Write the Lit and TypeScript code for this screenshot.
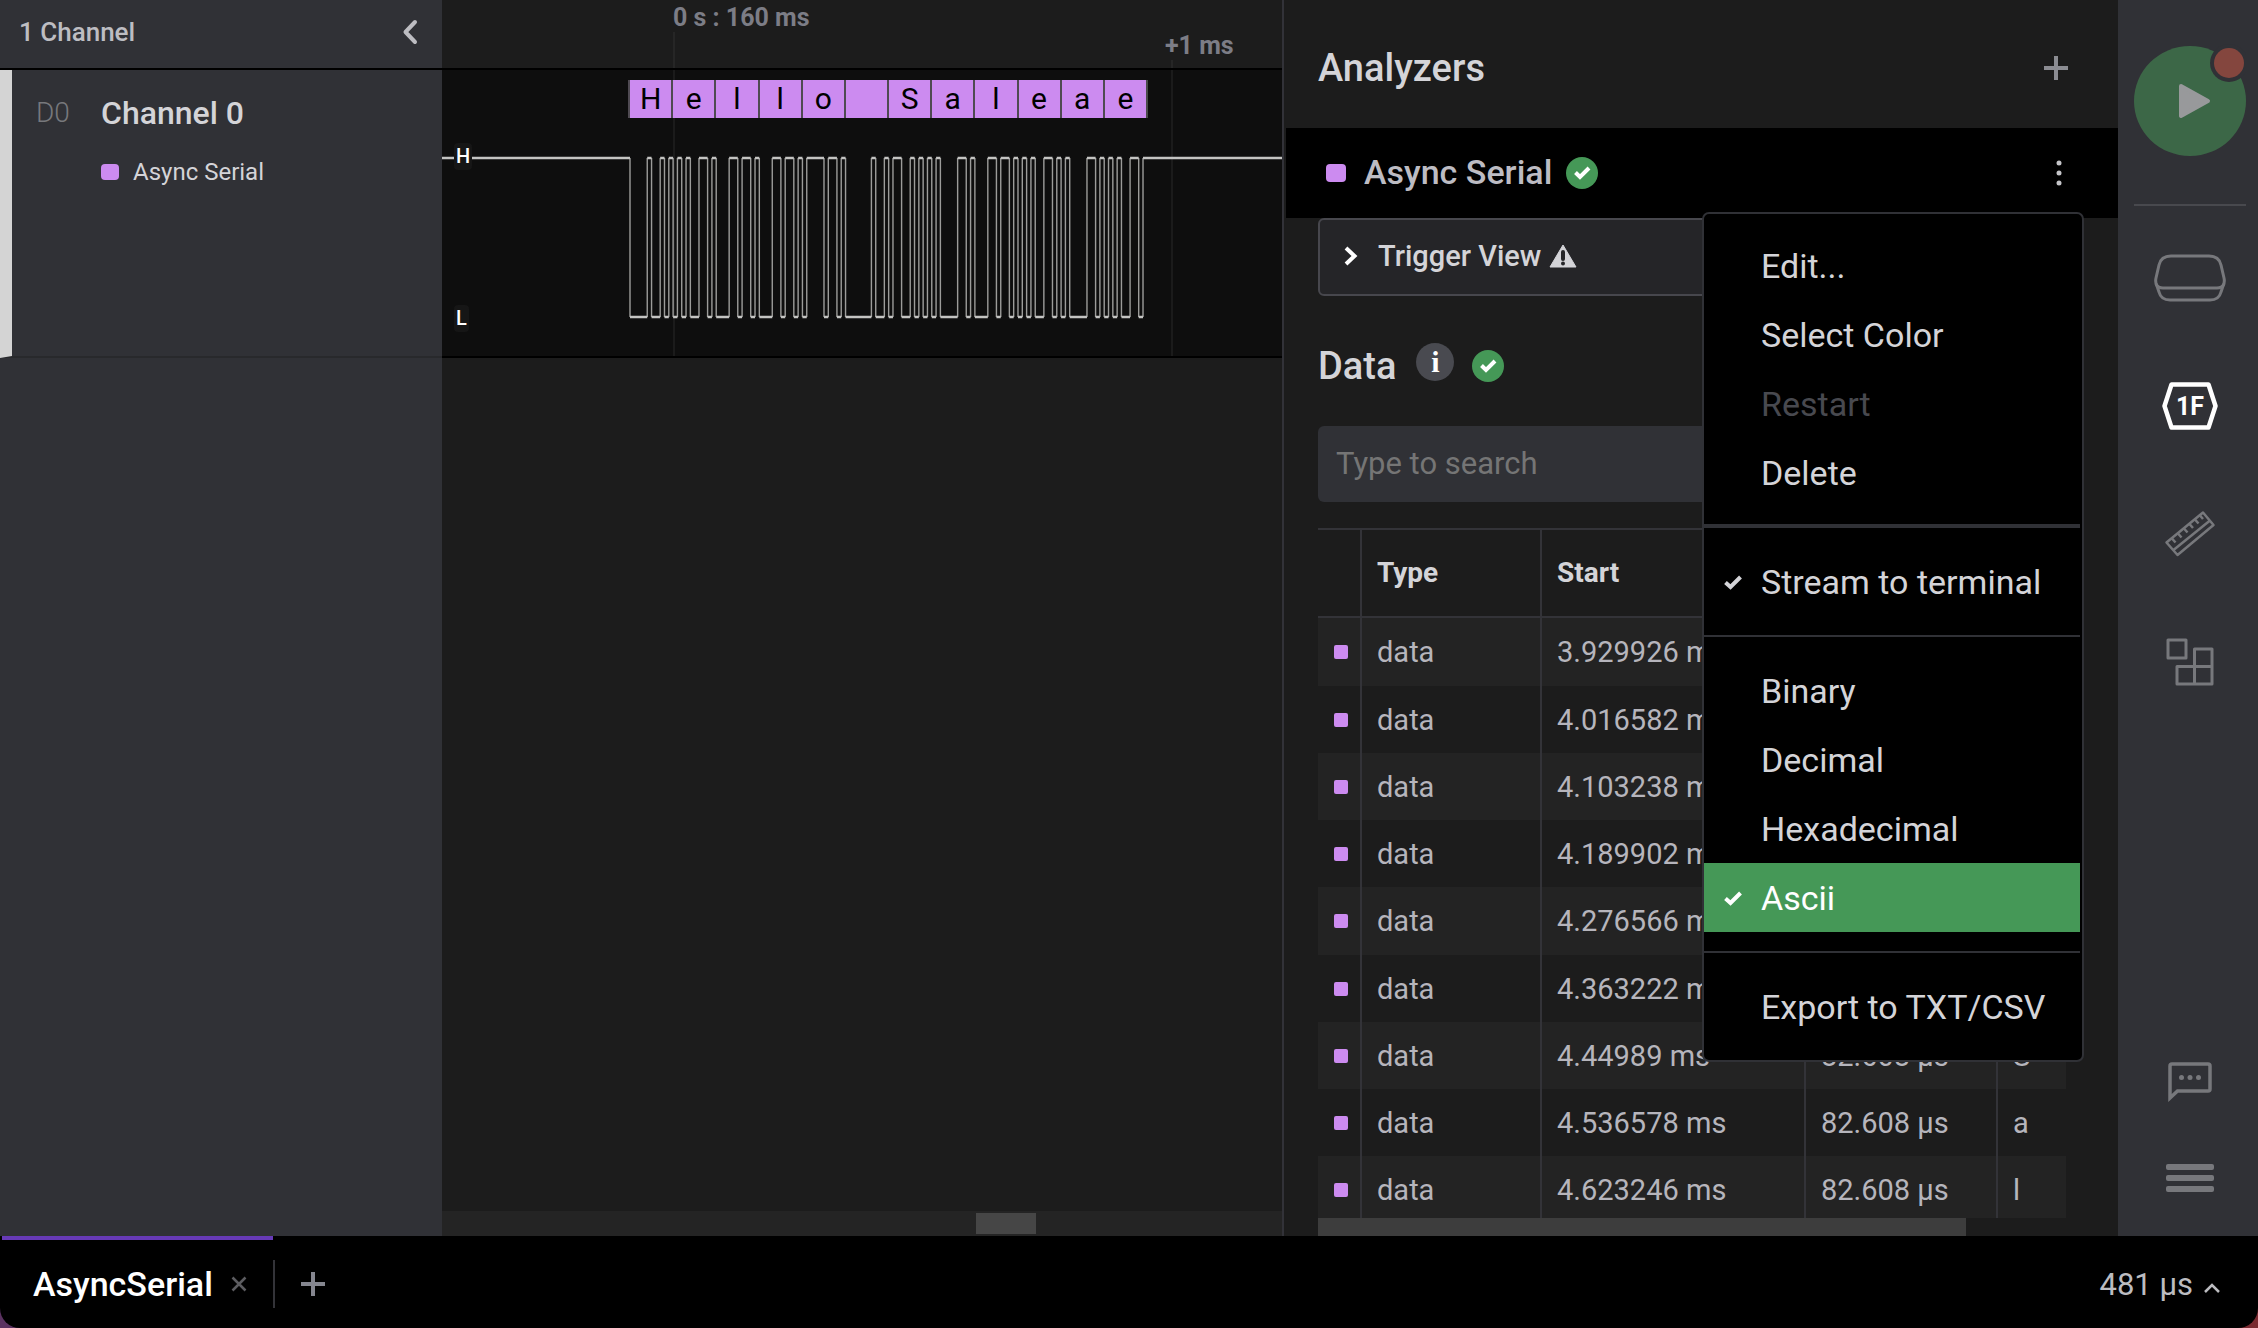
import { LitElement, html, svg, css, nothing } from "lit";
import { customElement, property, state } from "lit/decorators.js";
import { classMap } from "lit/directives/class-map.js";
import { styleMap } from "lit/directives/style-map.js";

const base = css`
  :host {
    display: block;
    box-sizing: border-box;
    font-family: Roboto, "Liberation Sans", sans-serif;
    color: #d4d4d8;
  }
  *,
  *::before,
  *::after {
    box-sizing: border-box;
  }
  button {
    display: flex;
    align-items: center;
    justify-content: center;
    margin: 0;
    padding: 0;
    border: 0;
    background: none;
    color: inherit;
    font: inherit;
    cursor: pointer;
  }
  h1,
  h2,
  h3,
  p {
    margin: 0;
    font-weight: 500;
  }
  svg {
    display: block;
    flex: none;
  }
`;

const MESSAGE = "Hello Saleae";

/* Time axis, in pixels of the plot. */
const AXIS = { frameStart: 188, bit: 4.311, high: 88, low: 247, farRight: 6000 };

/** Points at which a UART line (8N1, least significant bit first) changes level. */
function uartEdges(text: string): { at: number; high: boolean }[] {
  const levels: boolean[] = [];
  for (const ch of text) {
    levels.push(false);
    for (let i = 0; i < 8; i++) levels.push(((ch.charCodeAt(0) >> i) & 1) === 1);
    levels.push(true);
  }
  const edges: { at: number; high: boolean }[] = [];
  let current = true;
  levels.forEach((level, i) => {
    if (level !== current) {
      edges.push({ at: AXIS.frameStart + i * AXIS.bit, high: level });
      current = level;
    }
  });
  return edges;
}

const checkBadge = html`<svg width="32" height="32" viewBox="0 0 32 32" role="img" aria-label="Ready">
  <circle cx="16" cy="16" r="16" fill="#459857" />
  <path d="M9.500 15.500 L14 20 L23 11" fill="none" stroke="#fff" stroke-width="4" />
</svg>`;

@customElement("channel-list")
export class ChannelList extends LitElement {
  static styles = [
    base,
    css`
      :host {
        background: #303136;
      }
      .head {
        display: flex;
        align-items: center;
        justify-content: space-between;
        height: 70px;
        padding: 0 22px 4px 19px;
        border-bottom: 2px solid #000;
        color: #bdbdc2;
      }
      .count {
        font-size: 26px;
      }
      .collapse {
        width: 20px;
        height: 28px;
      }
      .channel {
        display: grid;
        grid-template-columns: 65px 1fr;
        align-content: start;
        height: 288px;
        padding: 23px 20px 0 24px;
        border-left: 12px solid #d4d4d4;
        border-bottom: 2px solid #28292c;
      }
      .port {
        color: #77787c;
        font-size: 28px;
        font-weight: 300;
        line-height: 40px;
      }
      .name {
        font-size: 32px;
        line-height: 40px;
      }
      .analyzer {
        grid-column: 2;
        display: flex;
        align-items: center;
        gap: 14px;
        margin-top: 24px;
        font-size: 24px;
        line-height: 30px;
      }
      .swatch {
        width: 18px;
        height: 16px;
        border-radius: 4px;
        background: #cc8bf0;
      }
    `,
  ];

  render() {
    return html`
      <div class="head">
        <h2 class="count">1 Channel</h2>
        <button class="collapse" aria-label="Collapse channels">
          <svg width="20" height="28" viewBox="0 0 20 28">
            <path
              d="M15 4 L5.500 14 L15 24"
              fill="none"
              stroke="#bdbdc2"
              stroke-width="4"
              stroke-linecap="round"
              stroke-linejoin="round"
            />
          </svg>
        </button>
      </div>
      <div class="channel">
        <span class="port">D0</span>
        <h3 class="name">Channel 0</h3>
        <div class="analyzer"><span class="swatch"></span><span>Async Serial</span></div>
      </div>
    `;
  }
}

@customElement("signal-plot")
export class SignalPlot extends LitElement {
  static styles = [
    base,
    css`
      :host {
        display: flex;
        flex-direction: column;
        min-width: 0;
        overflow: hidden;
        background: #1c1c1c;
      }
      .ruler {
        position: relative;
        height: 70px;
        border-bottom: 2px solid #000;
        color: #7c7d86;
        font-size: 25px;
        font-weight: 700;
        line-height: 28px;
        white-space: nowrap;
      }
      .tick {
        position: absolute;
        bottom: 0;
        width: 2px;
        background: #262626;
      }
      .tick-label {
        position: absolute;
      }
      .lane {
        position: relative;
        height: 288px;
        padding-top: 10px;
        border-bottom: 2px solid #000;
        background: #0e0e0e;
      }
      .wave {
        position: absolute;
        inset: 0;
      }
      .frames {
        position: relative;
        display: grid;
        grid-template-columns: repeat(12, 1fr);
        width: 520px;
        height: 38px;
        margin-left: 186px;
        border-right: 2px solid #4a4a4a;
      }
      .frame {
        border-left: 2px solid #4f4a52;
        background: #cc8bf0;
        color: #000;
        font-size: 30px;
        line-height: 38px;
        text-align: center;
      }
      .level {
        position: absolute;
        left: 12px;
        padding: 0 2px;
        border-radius: 4px;
        background: #161616;
        color: #fff;
        font-size: 20px;
        font-weight: 500;
        line-height: 27px;
      }
      .level-high {
        top: 73px;
      }
      .level-low {
        top: 235px;
      }
      .scroll {
        height: 25px;
        margin-top: auto;
        padding: 2px 0 2px 534px;
        background: #242424;
      }
      .thumb {
        width: 60px;
        height: 100%;
        background: #464646;
      }
    `,
  ];

  private trace() {
    const { high, low, farRight } = AXIS;
    let flat = `M0 ${high}`;
    let steep = "";
    let y = high;
    for (const edge of uartEdges(MESSAGE)) {
      const next = edge.high ? high : low;
      flat += `H${edge.at}M${edge.at} ${next}`;
      steep += `M${edge.at} ${y}V${next}`;
      y = next;
    }
    flat += `H${farRight}`;
    return svg`
      <path d=${steep} fill="none" stroke="#9c9c9a" stroke-width="1.400" />
      <path d=${flat} fill="none" stroke="#c4c4c2" stroke-width="2.600" />`;
  }

  render() {
    const ticks = [
      { left: 231, height: 36, label: "0 s : 160 ms", top: 4, labelLeft: 231 },
      { left: 729, height: 8, label: "+1 ms", top: 32, labelLeft: 723 },
    ];
    return html`
      <div class="ruler">
        ${ticks.map(
          (t) => html`
            <span class="tick" style=${styleMap({ left: `${t.left}px`, height: `${t.height}px` })}></span>
            <span class="tick-label" style=${styleMap({ left: `${t.labelLeft}px`, top: `${t.top}px` })}
              >${t.label}</span
            >
          `
        )}
      </div>
      <div class="lane">
        <svg class="wave" width="100%" height="100%" role="img" aria-label="Channel 0 waveform">
          ${ticks.map((t) => svg`<rect x=${t.left} y="0" width="2" height="286" fill="#1b1b1b" />`)}
          ${this.trace()}
        </svg>
        <div class="frames">${[...MESSAGE].map((ch) => html`<span class="frame">${ch}</span>`)}</div>
        <span class="level level-high">H</span>
        <span class="level level-low">L</span>
      </div>
      <div class="scroll"><div class="thumb"></div></div>
    `;
  }
}

interface MenuEntry {
  label: string;
  checked?: boolean;
  disabled?: boolean;
  active?: boolean;
}

@customElement("analyzer-menu")
export class AnalyzerMenu extends LitElement {
  static styles = [
    base,
    css`
      :host {
        width: 382px;
        padding-right: 2px;
        border: 2px solid #303136;
        border-radius: 7px;
        background: #000;
      }
      .group {
        padding: 17px 0;
      }
      .group + .group {
        padding: 19px 0;
        border-top: 2px solid #303136;
      }
      .group:nth-child(2) {
        border-top-width: 4px;
      }
      .item {
        display: grid;
        grid-template-columns: 37px 1fr;
        width: 100%;
        height: 69px;
        padding-left: 20px;
        font-size: 34px;
        line-height: 40px;
        text-align: left;
        white-space: nowrap;
      }
      .item span {
        grid-column: 2;
        grid-row: 1;
      }
      .item svg {
        grid-row: 1;
      }
      .item:disabled {
        color: #48494f;
      }
      .active {
        background: #459857;
        color: #fff;
      }
    `,
  ];

  @property({ attribute: false }) groups: MenuEntry[][] = [
    [{ label: "Edit..." }, { label: "Select Color" }, { label: "Restart", disabled: true }, { label: "Delete" }],
    [{ label: "Stream to terminal", checked: true }],
    [
      { label: "Binary" },
      { label: "Decimal" },
      { label: "Hexadecimal" },
      { label: "Ascii", checked: true, active: true },
    ],
    [{ label: "Export to TXT/CSV" }],
  ];

  render() {
    return this.groups.map(
      (group) => html`<div class="group">
        ${group.map(
          (item) => html`<button
            class=${classMap({ item: true, active: !!item.active })}
            ?disabled=${item.disabled}
          >
            ${item.checked
              ? html`<svg width="18" height="16" viewBox="0 0 18 16" aria-hidden="true">
                  <path d="M1.500 8.500 L6.500 13 L16.500 3" fill="none" stroke="currentColor" stroke-width="4" />
                </svg>`
              : nothing}
            <span>${item.label}</span>
          </button>`
        )}
      </div>`
    );
  }
}

@customElement("analyzer-panel")
export class AnalyzerPanel extends LitElement {
  static styles = [
    base,
    css`
      :host {
        display: flex;
        flex-direction: column;
        min-height: 0;
        border-left: 2px solid #323238;
        background: #1c1c1c;
      }
      .head {
        display: flex;
        align-items: center;
        justify-content: space-between;
        height: 128px;
        padding: 8px 48px 0 34px;
      }
      .title {
        font-size: 38px;
        line-height: 44px;
      }
      .add,
      .more {
        width: 28px;
        height: 32px;
      }
      .bar {
        position: relative;
        display: flex;
        align-items: center;
        height: 90px;
        margin-left: 2px;
        padding: 0 45px 0 40px;
        background: #000;
        color: #bdbcc3;
      }
      .bar .swatch {
        width: 20px;
        height: 18px;
        margin-right: 18px;
        border-radius: 4px;
      }
      .bar .name {
        margin-right: 14px;
        padding-bottom: 2px;
        font-size: 34px;
        line-height: 40px;
      }
      .more {
        margin-left: auto;
      }
      .menu {
        position: absolute;
        z-index: 1;
        top: 84px;
        right: 34px;
      }
      .body {
        display: flex;
        flex: 1;
        flex-direction: column;
        min-height: 0;
        padding: 0 52px 0 34px;
      }
      .trigger {
        flex: none;
        justify-content: flex-start;
        height: 78px;
        padding: 0 24px 2px;
        border: 2px solid #47474d;
        border-radius: 6px;
        background: #252528;
        font-size: 29px;
        font-weight: 500;
        line-height: 34px;
      }
      .trigger .label {
        margin: 0 8px 0 20px;
      }
      .section {
        display: flex;
        flex: none;
        align-items: center;
        height: 130px;
        padding-top: 10px;
      }
      .section .title {
        margin-right: 20px;
      }
      .info {
        width: 38px;
        height: 38px;
        margin: 0 18px 8px 0;
        border-radius: 50%;
        background: #494a50;
        color: #fff;
        font-family: "Liberation Serif", serif;
        font-size: 30px;
        font-weight: 700;
        line-height: 34px;
      }
      .search {
        flex: none;
        width: 100%;
        height: 76px;
        margin: 0 0 26px;
        padding: 0 18px 2px;
        border: 0;
        border-radius: 6px;
        background: #303136;
        color: #d4d4d8;
        font: 400 31px Roboto, "Liberation Sans", sans-serif;
      }
      .search::placeholder {
        color: #757575;
        opacity: 1;
      }
      .rows {
        flex: 1;
        min-height: 0;
        overflow: hidden;
      }
      table {
        width: 100%;
        border-spacing: 0;
        table-layout: fixed;
        font-size: 29px;
        line-height: 34px;
      }
      th,
      td {
        padding: 0 0 0 15px;
        border-right: 2px solid #333338;
        text-align: left;
        white-space: nowrap;
      }
      th:last-child,
      td:last-child {
        border-right: 0;
      }
      th {
        height: 90px;
        border-top: 2px solid #333338;
        border-bottom: 2px solid #333338;
        font-size: 28px;
        font-weight: 700;
      }
      tbody {
        color: #b6b5bc;
      }
      td {
        height: 67px;
      }
      td:first-child {
        padding-left: 16px;
      }
      tr:nth-child(4n + 1) td {
        height: 68px;
      }
      tbody tr:nth-child(odd) {
        background: #232323;
      }
      .c-mark {
        width: 44px;
      }
      .c-type {
        width: 180px;
      }
      .c-start {
        width: 264px;
      }
      .c-duration {
        width: 192px;
      }
      .swatch {
        display: block;
        width: 14px;
        height: 14px;
        border-radius: 2px;
        background: #cc8bf0;
      }
      .scroll {
        flex: none;
        height: 18px;
      }
      .thumb {
        width: 648px;
        height: 18px;
        background: #3d3d3d;
      }
    `,
  ];

  @state() private starts = [
    "3.929926",
    "4.016582",
    "4.103238",
    "4.189902",
    "4.276566",
    "4.363222",
    "4.44989",
    "4.536578",
    "4.623246",
  ];

  render() {
    return html`
      <div class="head">
        <h1 class="title">Analyzers</h1>
        <button class="add" aria-label="Add analyzer">
          <svg width="24" height="24" viewBox="0 0 24 24">
            <path d="M12 0 V24 M0 12 H24" stroke="#8b8c92" stroke-width="4" />
          </svg>
        </button>
      </div>
      <div class="bar">
        <span class="swatch"></span>
        <h2 class="name">Async Serial</h2>
        ${checkBadge}
        <button class="more" aria-label="Analyzer options">
          <svg width="6" height="26" viewBox="0 0 6 26">
            <g fill="#c4c4c8">
              <circle cx="3" cy="3" r="2.500" />
              <circle cx="3" cy="13" r="2.500" />
              <circle cx="3" cy="23" r="2.500" />
            </g>
          </svg>
        </button>
        <analyzer-menu class="menu"></analyzer-menu>
      </div>
      <div class="body">
        <button class="trigger">
          <svg width="14" height="20" viewBox="0 0 14 20" aria-hidden="true">
            <path d="M2 2 L10.500 10 L2 18" fill="none" stroke="#fff" stroke-width="4" />
          </svg>
          <span class="label">Trigger View</span>
          <svg width="28" height="24" viewBox="0 0 28 24" role="img" aria-label="Warning">
            <path d="M14 1 L27 23 H1 Z" fill="#d4d4d8" stroke="#d4d4d8" stroke-linejoin="round" />
            <path d="M14 8 V15" stroke="#252528" stroke-width="4" stroke-linecap="round" />
            <circle cx="14" cy="19.500" r="2" fill="#252528" />
          </svg>
        </button>
        <div class="section">
          <h2 class="title">Data</h2>
          <button class="info" aria-label="About data">i</button>
          ${checkBadge}
        </div>
        <input class="search" type="text" placeholder="Type to search" aria-label="Type to search" />
        <div class="rows">
          <table>
            <colgroup>
              <col class="c-mark" />
              <col class="c-type" />
              <col class="c-start" />
              <col class="c-duration" />
              <col />
            </colgroup>
            <thead>
              <tr>
                <th></th>
                <th>Type</th>
                <th>Start</th>
                <th></th>
                <th></th>
              </tr>
            </thead>
            <tbody>
              ${this.starts.map(
                (start, i) => html`<tr>
                  <td><span class="swatch"></span></td>
                  <td>data</td>
                  <td>${start} ms</td>
                  <td>82.608 µs</td>
                  <td>${MESSAGE[i]}</td>
                </tr>`
              )}
            </tbody>
          </table>
        </div>
        <div class="scroll"><div class="thumb"></div></div>
      </div>
    `;
  }
}

@customElement("side-rail")
export class SideRail extends LitElement {
  static styles = [
    base,
    css`
      :host {
        display: flex;
        flex-direction: column;
        align-items: center;
        padding: 44px 12px 10px 16px;
        background: #303136;
        color: #77787c;
      }
      .play {
        height: 114px;
      }
      .rule {
        width: 100%;
        height: 2px;
        margin: 46px 0 8px;
        border: 0;
        background: #48494e;
      }
      .tool {
        width: 80px;
        height: 128px;
      }
      .foot {
        height: 96px;
      }
      .spacer {
        flex: 1;
      }
      .code {
        font-family: Roboto, "Liberation Sans", sans-serif;
        font-size: 25px;
        font-weight: 700;
      }
    `,
  ];

  render() {
    return html`
      <button class="play" aria-label="Start capture">
        <svg width="112" height="114" viewBox="0 0 112 114">
          <ellipse cx="56" cy="57" rx="56" ry="55" fill="#3c6747" />
          <path
            d="M47 42 L74 57 L47 72 Z"
            fill="#98999b"
            stroke="#98999b"
            stroke-width="4"
            stroke-linejoin="round"
          />
          <circle cx="95" cy="19" r="19" fill="#303136" />
          <circle cx="95" cy="19" r="15" fill="#84463e" />
        </svg>
      </button>
      <hr class="rule" />
      <button class="tool" aria-label="Device">
        <svg width="72" height="48" viewBox="0 0 72 48" fill="none" stroke="currentColor" stroke-width="3">
          <path
            d="M17 2 H55 Q65 2 67 11 L70 24 Q71 28 69 32 L67 38 Q65 46 56 46 H16 Q7 46 5 38 L3 32 Q1 28 2 24 L5 11 Q7 2 17 2 Z"
          />
          <path d="M2 30 Q4 34 9 34 H63 Q68 34 70 30" />
        </svg>
      </button>
      <button class="tool" aria-label="Analyzers">
        <svg width="56" height="48" viewBox="0 0 56 48">
          <path
            d="M9.500 2.500 H46.500 L53.500 24 L46.500 45.500 H9.500 L2.500 24 Z"
            fill="none"
            stroke="#fff"
            stroke-width="4.500"
            stroke-linejoin="round"
          />
          <text class="code" x="28" y="33" text-anchor="middle" fill="#fff">1F</text>
        </svg>
      </button>
      <button class="tool" aria-label="Measurements">
        <svg width="52" height="48" viewBox="0 0 52 48" fill="none" stroke="currentColor" stroke-width="2.500">
          <path d="M2.500 32.500 L39 2.500 L49.500 15 L13.500 45 Z" stroke-linejoin="round" />
          <path d="M9.500 40 L46 10.500" />
          <path
            d="M8 28.500 l3.500 4 M14 23.500 l3.500 4 M20 18.500 l3.500 4 M25.500 14 l3.500 4 M31 9.500 l3.500 4 M36 5.500 l3 3.500"
          />
        </svg>
      </button>
      <button class="tool" aria-label="Extensions">
        <svg
          width="48"
          height="48"
          viewBox="0 0 48 48"
          fill="none"
          stroke="currentColor"
          stroke-width="3"
          stroke-linejoin="round"
        >
          <rect x="2" y="2" width="18" height="18" />
          <path d="M28.500 46 V11 H46 V46 H11 V28.500 H46" />
        </svg>
      </button>
      <div class="spacer"></div>
      <button class="foot" aria-label="Feedback">
        <svg width="44" height="40" viewBox="0 0 44 40">
          <path
            d="M2 36 V4 Q2 2 4 2 H40 Q42 2 42 4 V27 Q42 29 40 29 H9.500 Z"
            fill="none"
            stroke="currentColor"
            stroke-width="3.500"
          />
          <g fill="currentColor">
            <circle cx="13.500" cy="15.500" r="2.500" />
            <circle cx="22" cy="15.500" r="2.500" />
            <circle cx="30.500" cy="15.500" r="2.500" />
          </g>
        </svg>
      </button>
      <button class="foot" aria-label="Main menu">
        <svg width="48" height="28" viewBox="0 0 48 28" fill="currentColor">
          <rect width="48" height="6" rx="2" />
          <rect y="11" width="48" height="6" rx="2" />
          <rect y="22" width="48" height="6" rx="2" />
        </svg>
      </button>
    `;
  }
}

@customElement("tab-bar")
export class TabBar extends LitElement {
  static styles = [
    base,
    css`
      :host {
        display: flex;
        align-items: center;
        border-radius: 0 0 20px 20px;
        background: #000;
      }
      .tab {
        display: flex;
        align-items: center;
        align-self: stretch;
        gap: 18px;
        margin-left: 2px;
        padding: 0 26px 0 31px;
        border-top: 4px solid #673ab7;
        color: #fff;
        font-size: 34px;
        font-weight: 500;
      }
      .add {
        height: 48px;
        margin-top: 4px;
        padding: 0 26px;
        border-left: 2px solid #333338;
      }
      .status {
        gap: 10px;
        margin: 4px 0 0 auto;
        padding: 0 37px 0 0;
        color: #bcbcc0;
        font-size: 31px;
      }
      .status svg {
        margin-top: 8px;
      }
    `,
  ];

  render() {
    return html`
      <div class="tab">
        <span>AsyncSerial</span>
        <button aria-label="Close tab">
          <svg width="16" height="16" viewBox="0 0 16 16">
            <path d="M1.500 1.500 L14.500 14.500 M14.500 1.500 L1.500 14.500" stroke="#5c5c60" stroke-width="2.500" />
          </svg>
        </button>
      </div>
      <button class="add" aria-label="New tab">
        <svg width="24" height="24" viewBox="0 0 24 24">
          <path d="M12 0 V24 M0 12 H24" stroke="#85868f" stroke-width="4" />
        </svg>
      </button>
      <button class="status">
        <span>481 µs</span>
        <svg width="18" height="10" viewBox="0 0 18 10" aria-hidden="true">
          <path d="M2 9 L9 2 L16 9" fill="none" stroke="#bcbcc0" stroke-width="2.500" />
        </svg>
      </button>
    `;
  }
}

@customElement("app-root")
export class AppRoot extends LitElement {
  static styles = [
    base,
    css`
      :host {
        background: linear-gradient(90deg, #5a3260, #7a2a30);
      }
      .app {
        display: grid;
        grid-template-rows: minmax(0, 1fr) 92px;
        height: 100vh;
      }
      .workspace {
        display: grid;
        grid-template-columns: 442px minmax(0, 1fr) 836px 140px;
        min-height: 0;
      }
    `,
  ];

  render() {
    return html`
      <div class="app">
        <main class="workspace">
          <channel-list></channel-list>
          <signal-plot></signal-plot>
          <analyzer-panel></analyzer-panel>
          <side-rail></side-rail>
        </main>
        <tab-bar></tab-bar>
      </div>
    `;
  }
}
